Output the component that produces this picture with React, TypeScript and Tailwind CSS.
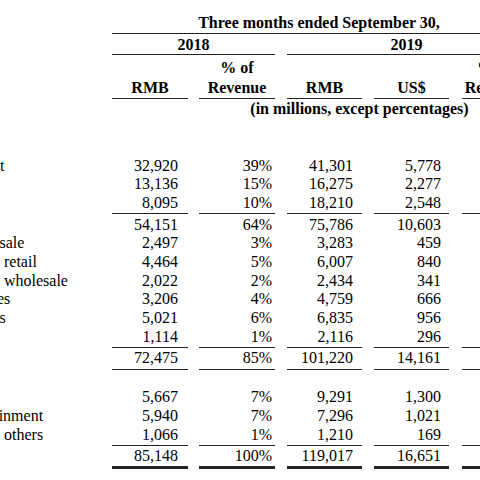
type Row = {
  label: string;
  level: 0 | 1 | 2;
  vals?: string[];
  ruleBelow?: boolean;
  afterRule?: boolean;
  total?: boolean;
};

const rows: Row[] = [
  { label: "Core commerce:", level: 0 },
  { label: "China commerce retail", level: 1 },
  { label: "Customer management", level: 2, vals: ["32,920", "39%", "41,301", "5,778", "35%"] },
  { label: "Commission", level: 2, vals: ["13,136", "15%", "16,275", "2,277", "14%"] },
  { label: "Others", level: 2, vals: ["8,095", "10%", "18,210", "2,548", "15%"], ruleBelow: true },
  { label: "", level: 1, vals: ["54,151", "64%", "75,786", "10,603", "64%"], afterRule: true },
  { label: "China commerce wholesale", level: 1, vals: ["2,497", "3%", "3,283", "459", "3%"] },
  { label: "International commerce retail", level: 1, vals: ["4,464", "5%", "6,007", "840", "5%"] },
  { label: "International commerce wholesale", level: 1, vals: ["2,022", "2%", "2,434", "341", "2%"] },
  { label: "Cainiao logistics services", level: 1, vals: ["3,206", "4%", "4,759", "666", "4%"] },
  { label: "Local consumer services", level: 1, vals: ["5,021", "6%", "6,835", "956", "6%"] },
  { label: "Others", level: 1, vals: ["1,114", "1%", "2,116", "296", "2%"], ruleBelow: true },
  { label: "Total core commerce", level: 0, vals: ["72,475", "85%", "101,220", "14,161", "85%"], afterRule: true, ruleBelow: true },
  { label: "", level: 0 },
  { label: "Cloud computing", level: 0, vals: ["5,667", "7%", "9,291", "1,300", "8%"] },
  { label: "Digital media and entertainment", level: 0, vals: ["5,940", "7%", "7,296", "1,021", "6%"] },
  { label: "Innovation initiatives and others", level: 0, vals: ["1,066", "1%", "1,210", "169", "1%"], ruleBelow: true },
  { label: "Total", level: 0, vals: ["85,148", "100%", "119,017", "16,651", "100%"], afterRule: true, total: true },
];

// column boxes: x 112-188, 199-275, 287-362, 374-449, 462-526
const colBox = ["w-[76px]", "ml-[11px] w-[76px]", "ml-[12px] w-[75px]", "ml-[12px] w-[75px]", "ml-[13px] w-[64px]"];
const colPad = ["pr-[10px]", "pr-[3px]", "pr-[9px]", "pr-[8px]", "pr-[3px]"];
const levelPad = ["pl-[6.5px]", "pl-[17.6px]", "pl-[26.5px]"];

function HeaderCell({ i, top, bottom }: { i: number; top?: string; bottom: string }) {
  return (
    <div className={`${colBox[i]} border-b border-[#222] pt-[3px] text-center leading-[20px]`}>
      <div>{top ?? "\u00a0"}</div>
      <div>{bottom}</div>
    </div>
  );
}

function DataRow({ row }: { row: Row }) {
  return (
    <div className={`flex leading-[18.65px] ${row.afterRule ? "pt-[1.5px]" : ""}`}>
      <div className={`w-[282px] shrink-0 overflow-hidden whitespace-nowrap ${levelPad[row.level]}`}>
        {row.label || "\u00a0"}
      </div>
      {colBox.map((box, i) => (
        <div
          key={i}
          className={`${box} shrink-0 text-right ${colPad[i]} ${
            row.total
              ? "border-b-[3px] border-[#222] pb-[0.5px]"
              : row.ruleBelow
              ? "border-b border-[#222] pb-[0.5px]"
              : ""
          }`}
        >
          {row.vals ? row.vals[i] : "\u00a0"}
        </div>
      ))}
    </div>
  );
}

export default function App() {
  return (
    <div className="w-[480px] h-[480px] overflow-hidden bg-white text-black font-['Liberation_Serif','Times_New_Roman',serif] text-[16px]">
      <div className="ml-[-170px] w-max">
        <div className="flex font-bold">
          <div className="w-[282px] shrink-0" />
          <div className="w-[414px] border-b border-[#222] pt-[13px] pb-[1px] text-center leading-[19px]">
            Three months ended September 30,
          </div>
        </div>
        <div className="flex font-bold">
          <div className="w-[282px] shrink-0" />
          <div className="w-[163px] border-b border-[#222] pt-[1px] text-center leading-[19px]">2018</div>
          <div className="ml-[12px] w-[239px] border-b border-[#222] pt-[1px] text-center leading-[19px]">2019</div>
        </div>
        <div className="flex font-bold">
          <div className="w-[282px] shrink-0" />
          <HeaderCell i={0} bottom="RMB" />
          <HeaderCell i={1} top="% of" bottom="Revenue" />
          <HeaderCell i={2} bottom="RMB" />
          <HeaderCell i={3} bottom="US$" />
          <HeaderCell i={4} top="% of" bottom="Revenue" />
        </div>
        <div className="flex font-bold">
          <div className="w-[282px] shrink-0" />
          <div className="ml-[87px] w-[327px] pr-[6px] text-center leading-[19px]">
            (in millions, except percentages)
          </div>
        </div>
        <div className="mt-[1.5px]">
          {rows.map((row, i) => (
            <DataRow key={i} row={row} />
          ))}
        </div>
      </div>
    </div>
  );
}
